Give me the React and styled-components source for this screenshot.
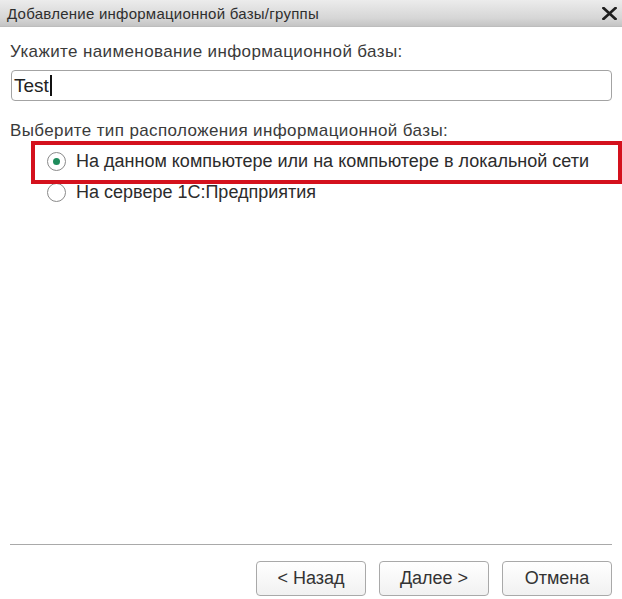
import React from "react";
import styled, { createGlobalStyle } from "styled-components";

const Global = createGlobalStyle`
  html, body { margin: 0; padding: 0; background: #ffffff; }
  body { font-family: "Liberation Sans", Arial, sans-serif; }
  * { box-sizing: border-box; }
`;

const Window = styled.div`
  width: 622px;
  height: 599px;
  display: flex;
  flex-direction: column;
  background: #ffffff;
  overflow: hidden;
`;

const TitleBar = styled.div`
  height: 27px;
  flex: none;
  display: flex;
  align-items: center;
  justify-content: space-between;
  padding: 0 4px 0 7px;
  background: linear-gradient(#ececec, #d6d6d6 70%, #c4c4c4);
  border-bottom: 1px solid #bdbdbd;
`;

const Title = styled.div`
  font-size: 15px;
  color: #2e2e2e;
  letter-spacing: 0.25px;
`;

const CloseBtn = styled.div`
  width: 18px;
  height: 18px;
  display: flex;
  align-items: center;
  justify-content: center;
`;

const Body = styled.div`
  flex: 1;
  display: flex;
  flex-direction: column;
  padding: 15px 10px 0 10px;
`;

const Label = styled.div`
  font-size: 17px;
  line-height: 20px;
  color: #3a3a3a;
  margin-top: ${(p) => p.$mt || 0}px;
  letter-spacing: 0.38px;
`;

const Input = styled.div`
  margin-top: 8px;
  height: 31px;
  margin-left: 1px;
  border: 1px solid #a3a3a3;
  border-radius: 4px;
  display: flex;
  align-items: center;
  padding-left: 2px;
  font-size: 19px;
  color: #222;
  background: #fff;
`;

const Caret = styled.span`
  display: inline-block;
  width: 2px;
  height: 21px;
  background: #111;
  margin-left: 1px;
`;

const Options = styled.div`
  position: relative;
  margin-top: 5px;
  display: flex;
  flex-direction: column;
`;

const Option = styled.div`
  height: 31px;
  display: flex;
  align-items: center;
  padding-left: 37px;
  gap: 10px;
  font-size: 18px;
  color: #2c2c2c;
`;

const Radio = styled.span`
  width: 19px;
  height: 19px;
  border-radius: 50%;
  border: 1px solid #8a8a8a;
  background: #fff;
  display: flex;
  align-items: center;
  justify-content: center;
  flex: none;
  &::after {
    content: "";
    width: 7px;
    height: 7px;
    border-radius: 50%;
    background: ${(p) => (p.$checked ? "#1f8c5c" : "transparent")};
  }
`;

const Highlight = styled.div`
  position: absolute;
  top: -5px;
  left: 21px;
  width: 591px;
  height: 43px;
  border: 4px solid #d4111d;
  pointer-events: none;
`;

const Footer = styled.div`
  flex: none;
  padding: 0 10px 3px 10px;
`;

const Separator = styled.div`
  height: 1px;
  background: #a9a9a9;
`;

const ButtonRow = styled.div`
  margin-top: 16px;
  display: flex;
  justify-content: flex-end;
  gap: 13px;
`;

const Button = styled.div`
  width: 110px;
  height: 35px;
  border: 1px solid #a9a9a9;
  border-radius: 4px;
  background: linear-gradient(#ffffff, #f1f1f1);
  display: flex;
  align-items: center;
  justify-content: center;
  font-size: 18px;
  color: #333;
`;

export default function App() {
  return (
    <>
      <Global />
      <Window>
        <TitleBar>
          <Title>Добавление информационной базы/группы</Title>
          <CloseBtn>
            <svg width="15" height="13" viewBox="0 0 15 13">
              <path d="M1.5 1 L13.5 12 M13.5 1 L1.5 12" stroke="#1e1e1e" strokeWidth="2.6" strokeLinecap="square" />
            </svg>
          </CloseBtn>
        </TitleBar>
        <Body>
          <Label>Укажите наименование информационной базы:</Label>
          <Input>
            Test<Caret />
          </Input>
          <Label $mt={20}>Выберите тип расположения информационной базы:</Label>
          <Options>
            <Option>
              <Radio $checked />
              На данном компьютере или на компьютере в локальной сети
            </Option>
            <Option>
              <Radio />
              На сервере 1С:Предприятия
            </Option>
            <Highlight />
          </Options>
        </Body>
        <Footer>
          <Separator />
          <ButtonRow>
            <Button>&lt; Назад</Button>
            <Button>Далее &gt;</Button>
            <Button>Отмена</Button>
          </ButtonRow>
        </Footer>
      </Window>
    </>
  );
}
